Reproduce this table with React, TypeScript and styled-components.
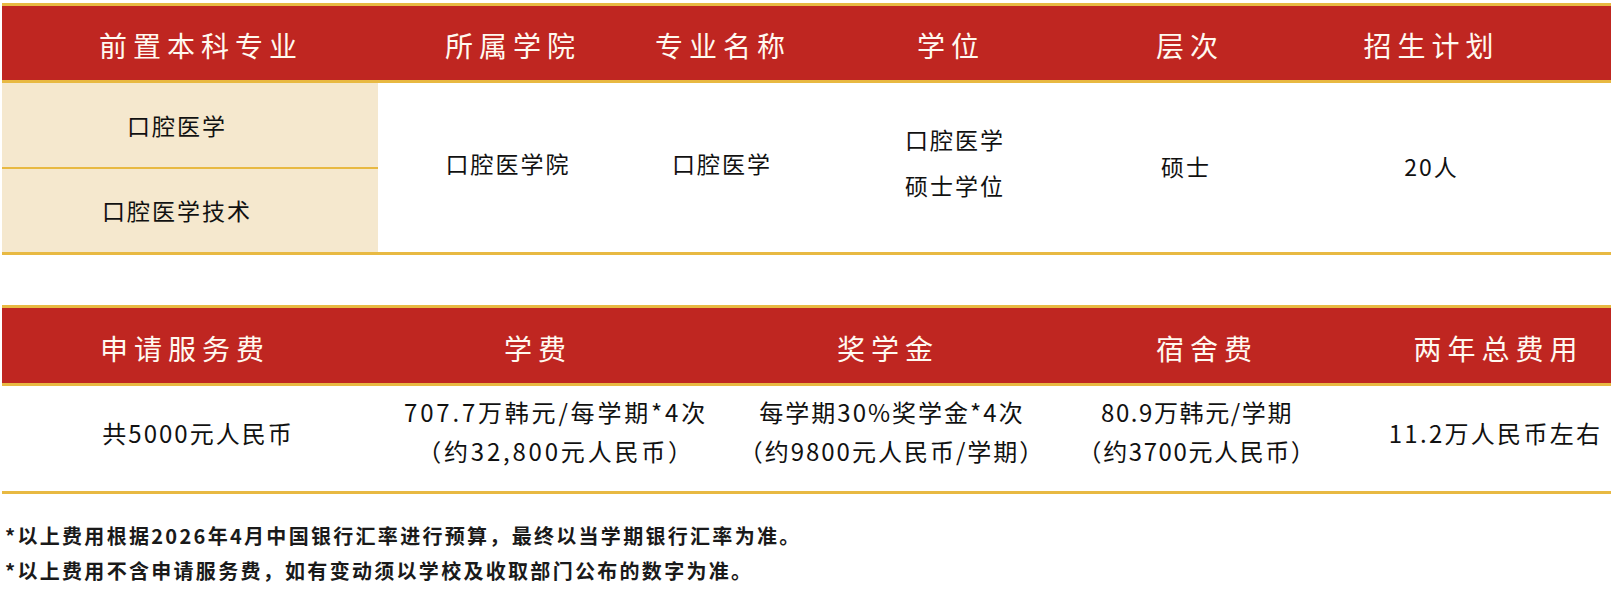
import React from 'react';
import styled, { createGlobalStyle } from 'styled-components';

// --- 색상 ---
const RED = '#bf2621';
const GOLD = '#e8b942';
const BEIGE = '#f5e8ce';
const CJK = '"Noto Sans CJK SC", "Noto Sans", sans-serif';

const GlobalStyle = createGlobalStyle`
    html, body {
        margin: 0;
        padding: 0;
        background: #ffffff;
        font-family: ${CJK};
    }
`;

const Page = styled.div`
    width: 1614px;
    padding: 3px 3px 0 2px;
    box-sizing: border-box;
    display: flex;
    flex-direction: column;
`;

const TableBox = styled.section<{ $gap?: number }>`
    margin-top: ${p => p.$gap ?? 0}px;
    border-top: 3px solid ${GOLD};
    border-bottom: 3px solid ${GOLD};
`;

const Row = styled.div<{ $cols: string; $height: number }>`
    display: grid;
    grid-template-columns: ${p => p.$cols};
    height: ${p => p.$height}px;
`;

const HeadRow = styled(Row)`
    background: ${RED};
    border-bottom: 3px solid ${GOLD};
`;

// $shift: 가운데 정렬 기준에서 좌우로 밀어내는 값(px)
const HeadCell = styled.div<{ $shift?: number }>`
    display: flex;
    align-items: center;
    justify-content: center;
    padding-left: ${p => (p.$shift && p.$shift > 0 ? p.$shift * 2 : 0)}px;
    padding-right: ${p => (p.$shift && p.$shift < 0 ? -p.$shift * 2 : 0)}px;
    padding-top: 4px;
    color: #fff9f0;
    font-size: 28px;
    letter-spacing: 6px;
    white-space: nowrap;
`;

const Cell = styled.div<{ $size?: number; $lh?: number; $shift?: number; $lift?: number; $spacing?: number }>`
    display: flex;
    flex-direction: column;
    align-items: center;
    justify-content: center;
    padding-left: ${p => (p.$shift && p.$shift > 0 ? p.$shift * 2 : 0)}px;
    padding-right: ${p => (p.$shift && p.$shift < 0 ? -p.$shift * 2 : 0)}px;
    padding-bottom: ${p => p.$lift ?? 0}px;
    color: #111111;
    font-size: ${p => p.$size ?? 23}px;
    line-height: ${p => p.$lh ?? 36}px;
    letter-spacing: ${p => p.$spacing ?? 2}px;
    white-space: nowrap;
`;

const MajorStack = styled.div`
    display: flex;
    flex-direction: column;
    background: ${BEIGE};
`;

const MajorCell = styled(Cell)`
    flex: 1;
    padding-right: 26px;
    & + & {
        border-top: 2px solid ${GOLD};
    }
`;

const Notes = styled.div`
    padding-top: 24px;
    padding-left: 3px;
    display: flex;
    flex-direction: column;
`;

const Note = styled.p`
    margin: 0;
    font-size: 20px;
    line-height: 35px;
    font-weight: 700;
    letter-spacing: 2.3px;
    color: #1a1a1a;
`;

// --- 데이터 ---
const PLAN_COLS = '376px 264px 156px 304px 166px 1fr';
const FEE_COLS = '368px 360px 320px 310px 1fr';

const planHeads = [
    { label: '前置本科专业', shift: 11 },
    { label: '所属学院', shift: 3 },
    { label: '专业名称', shift: 3 },
    { label: '学位', shift: 1 },
    { label: '层次', shift: 5 },
    { label: '招生计划', shift: -8 },
];

const feeHeads = [
    { label: '申请服务费', shift: -1 },
    { label: '学费', shift: -12 },
    { label: '奖学金', shift: -2 },
    { label: '宿舍费', shift: 2 },
    { label: '两年总费用', shift: 13 },
];

const feeBody = [
    { lines: ['共5000元人民币'], shift: 12, spacing: 2 },
    { lines: ['707.7万韩元/每学期*4次', '（约32,800元人民币）'], shift: 6, spacing: 2.8 },
    { lines: ['每学期30%奖学金*4次', '（约9800元人民币/学期）'], shift: 2, spacing: 2 },
    { lines: ['80.9万韩元/学期', '（约3700元人民币）'], shift: -8, spacing: 1.6 },
    { lines: ['11.2万人民币左右'], shift: 10, spacing: 2.3 },
];

export default function App() {
    return (
        <Page>
            <GlobalStyle />

            {/* 招生计划 표 */}
            <TableBox>
                <HeadRow $cols={PLAN_COLS} $height={74}>
                    {planHeads.map(h => (
                        <HeadCell key={h.label} $shift={h.shift}>{h.label}</HeadCell>
                    ))}
                </HeadRow>
                <Row $cols={PLAN_COLS} $height={169}>
                    <MajorStack>
                        <MajorCell>口腔医学</MajorCell>
                        <MajorCell>口腔医学技术</MajorCell>
                    </MajorStack>
                    <Cell $shift={-2} $lift={10}>口腔医学院</Cell>
                    <Cell $shift={2} $lift={10}>口腔医学</Cell>
                    <Cell $lh={46} $shift={5} $lift={12}>
                        <span>口腔医学</span>
                        <span>硕士学位</span>
                    </Cell>
                    <Cell $shift={1} $lift={4}>硕士</Cell>
                    <Cell $shift={-8} $lift={4}>20人</Cell>
                </Row>
            </TableBox>

            {/* 费用 표 */}
            <TableBox $gap={50}>
                <HeadRow $cols={FEE_COLS} $height={75}>
                    {feeHeads.map(h => (
                        <HeadCell key={h.label} $shift={h.shift}>{h.label}</HeadCell>
                    ))}
                </HeadRow>
                <Row $cols={FEE_COLS} $height={105}>
                    {feeBody.map(c => (
                        <Cell
                            key={c.lines[0]}
                            $size={24}
                            $lh={39}
                            $shift={c.shift}
                            $spacing={c.spacing}
                            $lift={c.lines.length > 1 ? 16 : 12}
                        >
                            {c.lines.map(l => <span key={l}>{l}</span>)}
                        </Cell>
                    ))}
                </Row>
            </TableBox>

            <Notes>
                <Note>*以上费用根据2026年4月中国银行汇率进行预算，最终以当学期银行汇率为准。</Note>
                <Note>*以上费用不含申请服务费，如有变动须以学校及收取部门公布的数字为准。</Note>
            </Notes>
        </Page>
    );
}
